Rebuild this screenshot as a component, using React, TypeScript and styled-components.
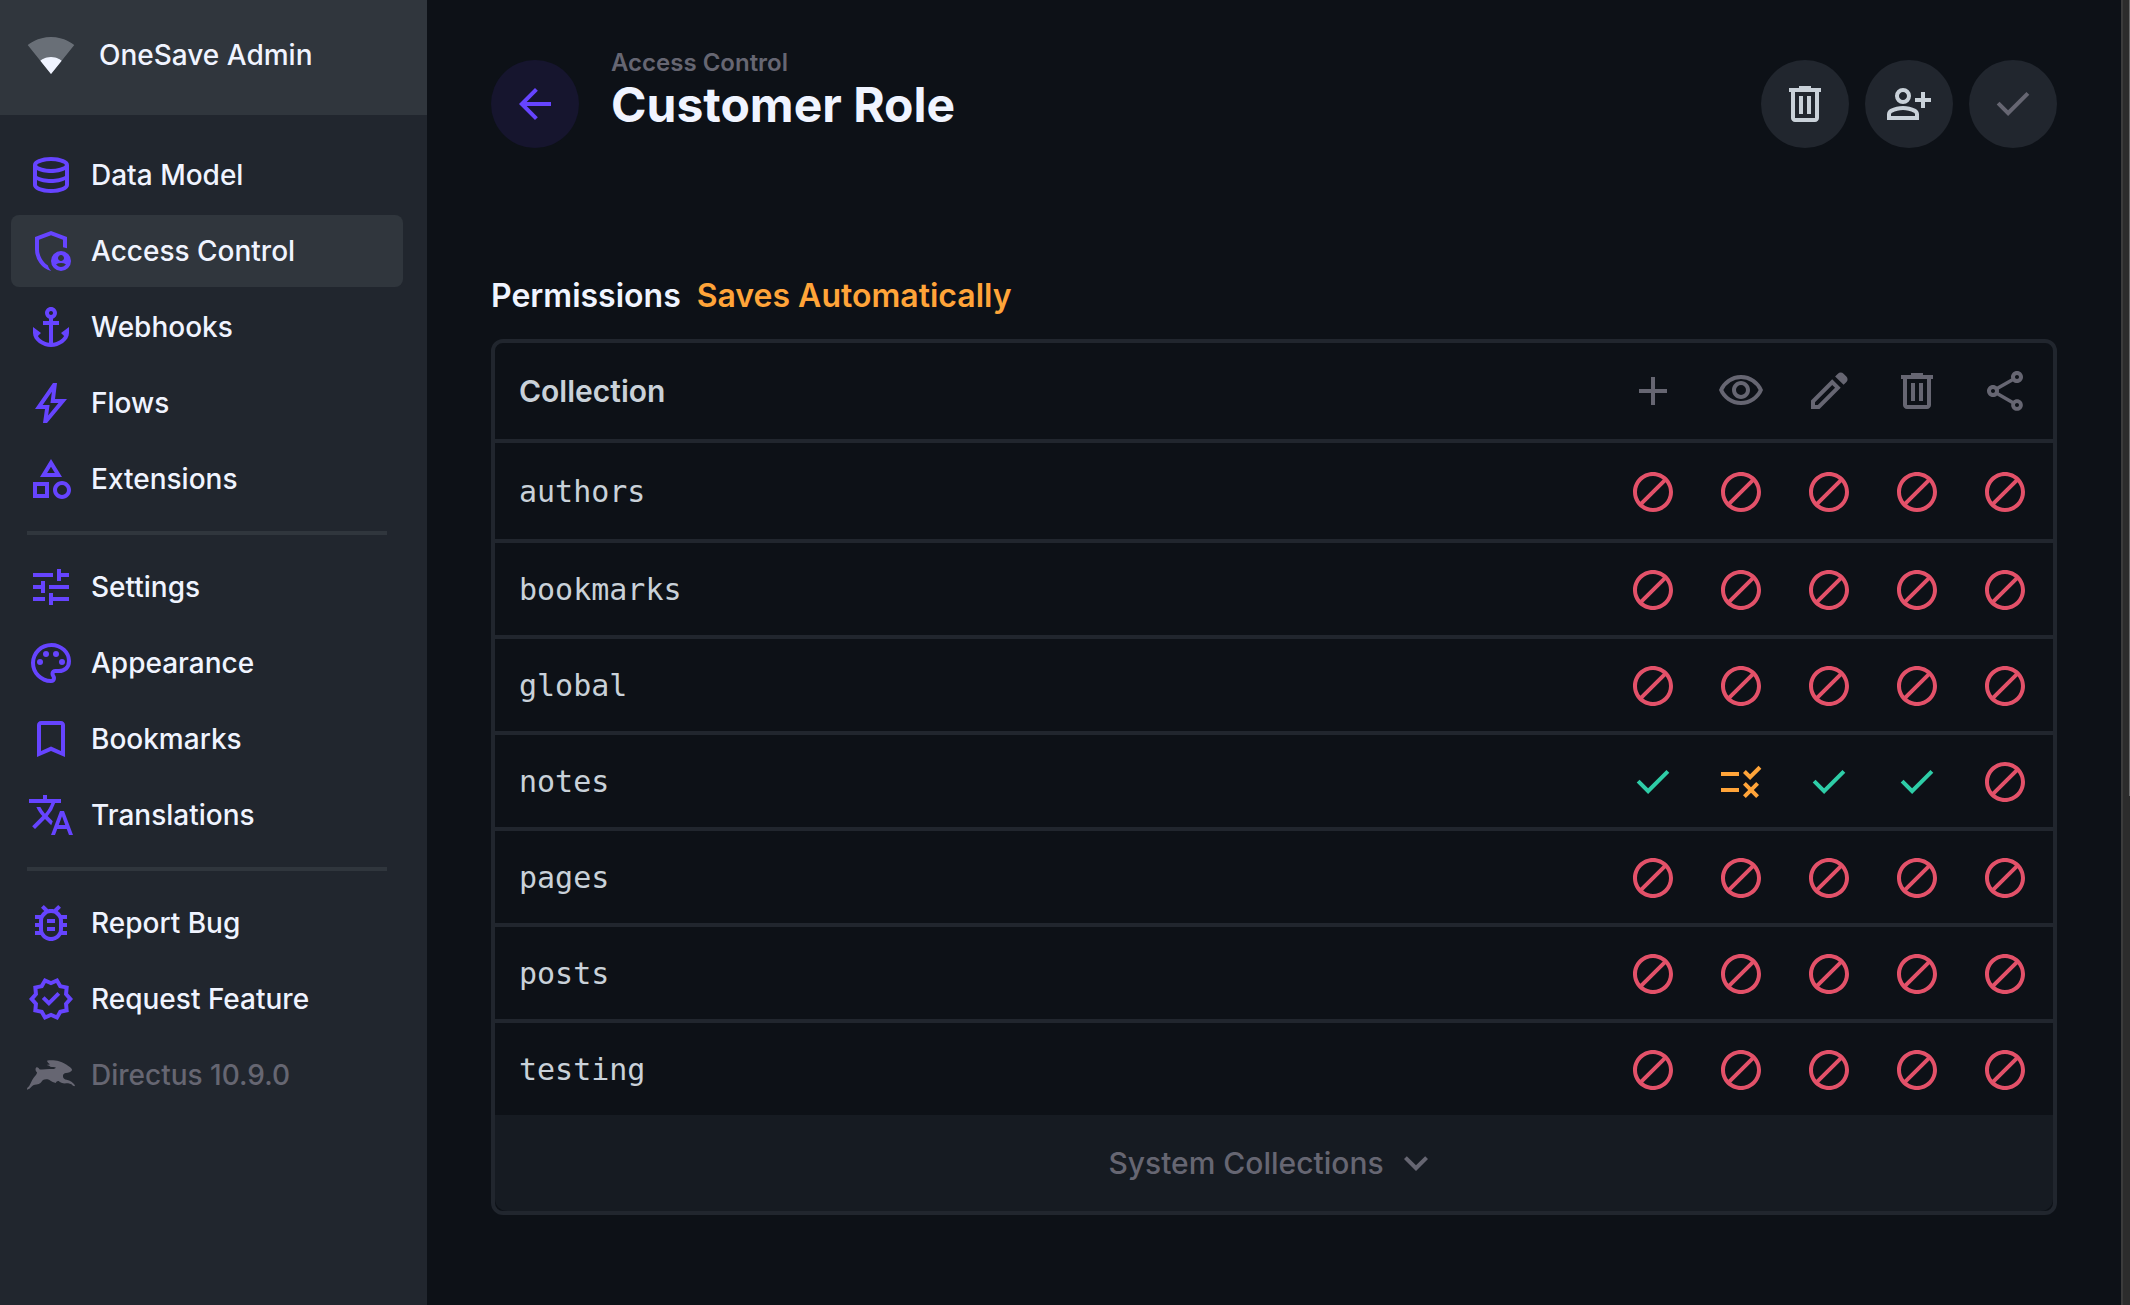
import React from "react";
import styled, { createGlobalStyle } from "styled-components";
import {
  MdAdd,
  MdAnchor,
  MdArrowBack,
  MdBlock,
  MdExpandMore,
  MdOutlineBugReport,
  MdOutlineCategory,
  MdOutlineShare,
  MdOutlineVisibility,
  MdRule,
  MdTranslate,
  MdTune,
} from "react-icons/md";

const color = {
  page: "#0d1117",
  footer: "#161b22",
  panel: "#21262e",
  raised: "#30363d",
  strong: "#f0f4ff",
  normal: "#c9d1d9",
  subdued: "#666672",
  primary: "#6644ff",
  primaryTint: "#16152e",
  danger: "#e35169",
  success: "#2ecda7",
  warning: "#ffa439",
};

const GlobalStyle = createGlobalStyle`
  *, *::before, *::after { box-sizing: border-box; }
  body {
    margin: 0;
    background: ${color.page};
    color: ${color.normal};
    font-family: Inter, "Liberation Sans", sans-serif;
    font-size: 28px;
    -webkit-font-smoothing: antialiased;
  }
  button { font: inherit; color: inherit; border: 0; padding: 0; background: none; cursor: pointer; }
  svg { display: block; flex: none; }
`;

type IconType = React.ComponentType<{ size?: number }>;

const glyph = (d: string, extra?: React.ReactNode): IconType =>
  function Glyph({ size = 48 }) {
    return (
      <svg width={size} height={size} viewBox="0 0 24 24" fill="currentColor" aria-hidden="true">
        <path fillRule="evenodd" d={d} />
        {extra}
      </svg>
    );
  };

const DatabaseIcon = glyph(
  "M12 21q-3.775 0-6.387-1.163Q3 18.675 3 17V7q0-1.65 2.637-2.825Q8.275 3 12 3t6.363 1.175Q21 5.35 21 7v10q0 1.675-2.613 2.837Q15.775 21 12 21Zm0-11.975q2.225 0 4.475-.637Q18.725 7.75 19 7.025q-.275-.725-2.512-1.375Q14.25 5 12 5q-2.275 0-4.463.638Q5.35 6.275 5 7.025q.35.75 2.537 1.375Q9.725 9.025 12 9.025ZM12 14q1.05 0 2.025-.1.975-.1 1.863-.288.887-.187 1.675-.462.787-.275 1.437-.625v-3q-.65.35-1.437.625-.788.275-1.675.462-.888.188-1.863.288-.975.1-2.025.1t-2.05-.1q-1-.1-1.887-.288-.888-.187-1.663-.462Q5.625 9.875 5 9.525v3q.625.35 1.4.625.775.275 1.663.462.887.188 1.887.288 1 .1 2.05.1Zm0 5q1.15 0 2.338-.175 1.187-.175 2.187-.462 1-.288 1.675-.65.675-.363.8-.738v-2.45q-.65.35-1.437.625-.788.275-1.675.462-.888.188-1.863.288-.975.1-2.025.1t-2.05-.1q-1-.1-1.887-.288-.888-.187-1.663-.462Q5.625 14.875 5 14.525V17q.125.375.788.725.662.35 1.662.638 1 .287 2.2.462Q10.85 19 12 19Z"
);

const ShieldUserIcon = glyph(
  "M17 17q.625 0 1.063-.438.437-.437.437-1.062t-.437-1.062Q17.625 14 17 14t-1.062.438Q15.5 14.875 15.5 15.5t.438 1.062Q16.375 17 17 17Zm0 3q.775 0 1.425-.363.65-.362 1.05-.962-.55-.325-1.175-.5T17 18q-.675 0-1.3.175t-1.175.5q.4.6 1.05.962Q16.225 20 17 20Zm-5 2q-3.475-.875-5.737-3.987Q4 14.9 4 11.1V5l8-3 8 3v5.675q-.475-.2-.975-.362-.5-.163-1.025-.238V6.4l-6-2.25L6 6.4v4.7q0 1.175.312 2.337.313 1.163.876 2.238.562 1.075 1.362 1.975.8.9 1.8 1.525.275.8.725 1.525.45.725 1.025 1.3H12Zm5 0q-2.075 0-3.537-1.462Q12 19.075 12 17q0-2.075 1.463-3.538Q14.925 12 17 12t3.538 1.462Q22 14.925 22 17t-1.462 3.538Q19.075 22 17 22Z"
);

const BoltIcon = glyph(
  "m8 22 1-7H4l9-13h2l-1 8h6L10 22Zm2.55-3.8 5.175-6.2h-4l.725-5.675L7.825 13H11.3Z"
);

const PaletteIcon = glyph(
  "M12 22q-2.05 0-3.875-.788-1.825-.787-3.187-2.15-1.363-1.362-2.15-3.187Q2 14.05 2 12q0-2.075.812-3.9.813-1.825 2.201-3.175Q6.4 3.575 8.25 2.787 10.1 2 12.2 2q2 0 3.775.688 1.775.687 3.113 1.9 1.337 1.212 2.125 2.875Q22 9.125 22 11.05q0 2.875-1.75 4.413Q18.5 17 16 17h-1.85q-.225 0-.312.125-.088.125-.088.275 0 .3.375.862.375.563.375 1.288 0 1.25-.687 1.85-.688.6-1.813.6Zm0-2q.225 0 .363-.125.137-.125.137-.325 0-.35-.375-.825-.375-.475-.375-1.425 0-1.05.725-1.675.725-.625 1.775-.625H16q1.65 0 2.825-.963Q20 13.075 20 11.05q0-3.025-2.312-5.038Q15.375 4 12.2 4 8.8 4 6.4 6.325 4 8.65 4 12q0 3.325 2.338 5.663Q8.675 20 12 20Z",
  <>
    <circle cx="6.5" cy="11.5" r="1.5" />
    <circle cx="9.5" cy="7.5" r="1.5" />
    <circle cx="14.5" cy="7.5" r="1.5" />
    <circle cx="17.5" cy="11.5" r="1.5" />
  </>
);

const BookmarkIcon = glyph(
  "M5 21V5q0-.825.588-1.413Q6.175 3 7 3h10q.825 0 1.413.587Q19 4.175 19 5v16l-7-3Zm2-3.05 5-2.15 5 2.15V5H7Z"
);

const VerifiedIcon = glyph(
  "m8.6 22.5-1.9-3.2-3.6-.8.35-3.7L1 12l2.45-2.8-.35-3.7 3.6-.8 1.9-3.2L12 2.95l3.4-1.45 1.9 3.2 3.6.8-.35 3.7L23 12l-2.45 2.8.35 3.7-3.6.8-1.9 3.2-3.4-1.45Zm.85-2.55L12 18.85l2.6 1.1 1.4-2.4 2.75-.65-.25-2.8 1.85-2.1-1.85-2.15.25-2.8-2.75-.6-1.45-2.4L12 5.15l-2.6-1.1L8 6.45l-2.75.6.25 2.8L3.65 12l1.85 2.1-.25 2.85 2.75.6Z",
  <path d="M10.95 15.55 16.6 9.9l-1.4-1.45-4.25 4.25-2.15-2.1L7.4 12Z" />
);

const TrashIcon = glyph(
  "M7 21q-.825 0-1.412-.587Q5 19.825 5 19V6H4V4h5V3h6v1h5v2h-1v13q0 .825-.587 1.413Q17.825 21 17 21ZM17 6H7v13h10ZM9 17h2V8H9Zm4 0h2V8h-2Z"
);

const PersonAddIcon = glyph(
  "M18 14v-3h-3V9h3V6h2v3h3v2h-3v3Zm-9-2q-1.65 0-2.825-1.175Q5 9.65 5 8q0-1.65 1.175-2.825Q7.35 4 9 4q1.65 0 2.825 1.175Q13 6.35 13 8q0 1.65-1.175 2.825Q10.65 12 9 12Zm-8 8v-2.8q0-.85.438-1.563.437-.712 1.162-1.087 1.55-.775 3.15-1.163Q7.35 13 9 13t3.25.387q1.6.388 3.15 1.163.725.375 1.162 1.087Q17 16.35 17 17.2V20Zm2-2h12v-.8q0-.275-.137-.5-.138-.225-.363-.35-1.35-.675-2.725-1.013Q10.4 15 9 15t-2.775.337Q4.85 15.675 3.5 16.35q-.225.125-.362.35-.138.225-.138.5Zm6-8q.825 0 1.413-.588Q11 8.825 11 8t-.587-1.412Q9.825 6 9 6q-.825 0-1.412.588Q7 7.175 7 8t.588 1.412Q8.175 10 9 10Z"
);

const CheckIcon = glyph("m9.55 18-5.7-5.7 1.425-1.425L9.55 15.15l9.175-9.175L20.15 7.4Z");

const PencilIcon = glyph(
  "M5 19h1.4l8.625-8.625-1.4-1.4L5 17.6ZM19.3 8.925l-4.25-4.2 1.4-1.4q.575-.575 1.413-.575.837 0 1.412.575l1.4 1.4q.575.575.6 1.388.025.812-.55 1.387ZM17.85 10.4 7.25 21H3v-4.25l10.6-10.6Z"
);

const RabbitIcon: IconType = ({ size = 48 }) => (
  <svg width={size} height={size} viewBox="0 0 144 144" fill="currentColor" aria-hidden="true">
    <path d="M60 29C68 27 84 27 96 31C108 35 118 40 124 45C131 49 136 54 135 58C133 63 124 66 117 66C111 66 107 71 108 77C109 82 113 85 119 86C129 87 139 95 144 103C144 106 141 106 138 104C132 98 126 97 118 97C108 98 100 95 95 90C91 89 88 92 86 96C81 94 74 92 66 86C59 84 53 84 48 87C44 91 42 97 35 99C27 101 19 101 15 106C10 112 5 116 0 116C-1 111 3 109 7 104C12 97 14 87 20 80C25 75 30 70 30 64C26 61 24 54 27 50C31 47 36 51 37 55C47 57 57 54 67 54C75 54 81 55 87 50C83 47 75 49 70 47C66 45 65 43 60 43C61 40 66 42 69 40C67 37 61 35 60 29Z" />
  </svg>
);

const LogoIcon: IconType = ({ size = 48 }) => (
  <svg width={size} height={size} viewBox="0 0 24 24" fill="currentColor" aria-hidden="true">
    <path
      opacity=".3"
      d="M12.01 21.49L23.64 7c-.45-.34-4.93-4-11.64-4C5.28 3 .81 6.66.36 7l11.63 14.49.01.01.01-.01z"
    />
    <path d="M6.67 14.86L12 21.49v.01l.01-.01 5.33-6.63C17.06 14.65 15.03 13 12 13s-5.06 1.65-5.33 1.86z" />
  </svg>
);

const Shell = styled.div`
  display: flex;
  min-height: 100vh;
`;

const Sidebar = styled.aside`
  flex: none;
  width: 427px;
  background: ${color.panel};
`;

const Brand = styled.div`
  display: flex;
  align-items: center;
  gap: 24px;
  height: 115px;
  padding: 0 27px 6px;
  background: ${color.raised};
  color: ${color.strong};
  font-weight: 500;
`;

const Nav = styled.nav`
  display: flex;
  flex-direction: column;
  gap: 4px;
  padding: 24px 24px 24px 11px;
`;

const NavLink = styled.a<{ $active?: boolean; $subdued?: boolean }>`
  display: flex;
  align-items: center;
  gap: 16px;
  height: 72px;
  padding: 0 16px;
  border-radius: 8px;
  background: ${(p) => (p.$active ? color.raised : "transparent")};
  color: ${(p) => (p.$subdued ? color.subdued : color.strong)};
  font-weight: 500;
  text-decoration: none;
  white-space: nowrap;

  svg {
    color: ${(p) => (p.$subdued ? color.subdued : color.primary)};
  }
`;

const Divider = styled.hr`
  width: auto;
  height: 4px;
  margin: 12px 16px;
  border: 0;
  background: ${color.raised};
`;

const Main = styled.main`
  flex: 1;
  min-width: 0;
  padding: 47px 64px 64px;
`;

const Header = styled.header`
  display: flex;
  align-items: center;
`;

const RoundButton = styled.button<{ $tone?: "primary" | "disabled" }>`
  display: grid;
  place-items: center;
  width: 88px;
  height: 88px;
  border-radius: 50%;
  background: ${(p) => (p.$tone === "primary" ? color.primaryTint : color.panel)};
  color: ${(p) =>
    p.$tone === "primary" ? color.primary : p.$tone === "disabled" ? color.subdued : color.normal};
`;

const Heading = styled.div`
  flex: 1;
  padding: 0 32px 30px;
`;

const Breadcrumb = styled.a`
  display: block;
  width: fit-content;
  color: ${color.subdued};
  font-size: 24px;
  font-weight: 600;
  line-height: 32px;
  text-decoration: none;
`;

const Title = styled.h1`
  margin: 0;
  color: ${color.strong};
  font-size: 48px;
  font-weight: 700;
  line-height: 52px;
`;

const Actions = styled.div`
  display: flex;
  gap: 16px;
`;

const SectionTitle = styled.h2`
  display: flex;
  gap: 16px;
  margin: 115px 0 23px;
  color: ${color.strong};
  font-size: 32px;
  font-weight: 600;
  line-height: 40px;
`;

const Notice = styled.span`
  color: ${color.warning};
`;

const Panel = styled.section`
  border: 4px solid ${color.panel};
  border-radius: 12px;
`;

const Table = styled.table`
  width: 100%;
  border-collapse: separate;
  border-spacing: 0;
  table-layout: fixed;
`;

const NameHead = styled.th`
  height: 100px;
  padding: 0 24px;
  border-bottom: 4px solid ${color.panel};
  font-size: 30px;
  font-weight: 600;
  text-align: left;
`;

const ActionHead = styled.th`
  width: 88px;
  padding: 0;
  border-bottom: 4px solid ${color.panel};
  color: ${color.subdued};

  svg {
    margin: 0 auto;
  }
`;

const EndHead = styled.td`
  width: 4px;
  padding: 0;
  border-bottom: 4px solid ${color.panel};
`;

const Row = styled.tr`
  height: 96px;

  &:first-child {
    height: 100px;
  }

  &:last-child {
    height: 92px;
  }

  > * {
    padding: 0;
    border-bottom: 4px solid ${color.panel};
  }

  &:last-child > * {
    border-bottom: 0;
  }
`;

const NameCell = styled.th`
  && {
    padding: 0 24px;
  }
  font-family: "DejaVu Sans Mono", "Liberation Mono", monospace;
  font-size: 30px;
  font-weight: 400;
  text-align: left;
`;

type Access = "none" | "full" | "custom";

const accessColor: Record<Access, string> = {
  none: color.danger,
  full: color.success,
  custom: color.warning,
};

const AccessButton = styled.button<{ $access: Access }>`
  display: block;
  margin: 0 auto;
  padding-top: 2px;
  color: ${(p) => accessColor[p.$access]};
`;

const SystemToggle = styled.button`
  display: flex;
  align-items: center;
  justify-content: center;
  gap: 8px;
  width: 100%;
  height: 96px;
  border-radius: 0 0 12px 12px;
  background: ${color.footer};
  color: ${color.subdued};
  font-size: 30px;
  font-weight: 500;
`;

const ScrollTrack = styled.div`
  flex: none;
  display: flex;
  justify-content: flex-end;
  width: 9px;
  border-left: 2px solid #3b3b3b;
  background: #2c2c2c;
`;

const ScrollThumb = styled.div`
  width: 1px;
  height: 61%;
  background: #6b6b6b;
`;

type NavItem = { label: string; icon: IconType; active?: boolean; subdued?: boolean };

const navGroups: NavItem[][] = [
  [
    { label: "Data Model", icon: DatabaseIcon },
    { label: "Access Control", icon: ShieldUserIcon, active: true },
    { label: "Webhooks", icon: MdAnchor },
    { label: "Flows", icon: BoltIcon },
    { label: "Extensions", icon: MdOutlineCategory },
  ],
  [
    { label: "Settings", icon: MdTune },
    { label: "Appearance", icon: PaletteIcon },
    { label: "Bookmarks", icon: BookmarkIcon },
    { label: "Translations", icon: MdTranslate },
  ],
  [
    { label: "Report Bug", icon: MdOutlineBugReport },
    { label: "Request Feature", icon: VerifiedIcon },
    { label: "Directus 10.9.0", icon: RabbitIcon, subdued: true },
  ],
];

const actions: { name: string; icon: IconType }[] = [
  { name: "Create", icon: MdAdd },
  { name: "Read", icon: MdOutlineVisibility },
  { name: "Update", icon: PencilIcon },
  { name: "Delete", icon: TrashIcon },
  { name: "Share", icon: MdOutlineShare },
];

const accessIcon: Record<Access, IconType> = {
  none: MdBlock,
  full: CheckIcon,
  custom: MdRule,
};

const noAccess: Access[] = ["none", "none", "none", "none", "none"];

const collections: { name: string; access: Access[] }[] = [
  { name: "authors", access: noAccess },
  { name: "bookmarks", access: noAccess },
  { name: "global", access: noAccess },
  { name: "notes", access: ["full", "custom", "full", "full", "none"] },
  { name: "pages", access: noAccess },
  { name: "posts", access: noAccess },
  { name: "testing", access: noAccess },
];

export default function App() {
  return (
    <>
      <GlobalStyle />
      <Shell>
        <Sidebar>
          <Brand>
            <LogoIcon size={48} />
            OneSave Admin
          </Brand>
          <Nav aria-label="Settings">
            {navGroups.map((group, index) => (
              <React.Fragment key={index}>
                {index > 0 && <Divider />}
                {group.map(({ label, icon: Icon, active, subdued }) => (
                  <NavLink
                    key={label}
                    href="#"
                    $active={active}
                    $subdued={subdued}
                    aria-current={active ? "page" : undefined}
                  >
                    <Icon size={48} />
                    {label}
                  </NavLink>
                ))}
              </React.Fragment>
            ))}
          </Nav>
        </Sidebar>

        <Main>
          <Header>
            <RoundButton type="button" $tone="primary" aria-label="Back">
              <MdArrowBack size={48} />
            </RoundButton>
            <Heading>
              <Breadcrumb href="#">Access Control</Breadcrumb>
              <Title>Customer Role</Title>
            </Heading>
            <Actions>
              <RoundButton type="button" aria-label="Delete role">
                <TrashIcon />
              </RoundButton>
              <RoundButton type="button" aria-label="Invite users">
                <PersonAddIcon />
              </RoundButton>
              <RoundButton type="button" $tone="disabled" aria-label="Save" disabled>
                <CheckIcon />
              </RoundButton>
            </Actions>
          </Header>

          <SectionTitle>
            Permissions <Notice>Saves Automatically</Notice>
          </SectionTitle>

          <Panel>
            <Table>
              <thead>
                <tr>
                  <NameHead scope="col">Collection</NameHead>
                  {actions.map(({ name, icon: Icon }) => (
                    <ActionHead key={name} scope="col" aria-label={name}>
                      <Icon size={48} />
                    </ActionHead>
                  ))}
                  <EndHead />
                </tr>
              </thead>
              <tbody>
                {collections.map(({ name, access }) => (
                  <Row key={name}>
                    <NameCell scope="row">{name}</NameCell>
                    {access.map((level, index) => {
                      const Icon = accessIcon[level];
                      return (
                        <td key={actions[index].name}>
                          <AccessButton
                            type="button"
                            $access={level}
                            aria-label={`${actions[index].name} ${name}: ${level}`}
                          >
                            <Icon size={48} />
                          </AccessButton>
                        </td>
                      );
                    })}
                    <td />
                  </Row>
                ))}
              </tbody>
            </Table>
            <SystemToggle type="button" aria-expanded="false">
              System Collections
              <MdExpandMore size={48} />
            </SystemToggle>
          </Panel>
        </Main>

        <ScrollTrack aria-hidden="true">
          <ScrollThumb />
        </ScrollTrack>
      </Shell>
    </>
  );
}
